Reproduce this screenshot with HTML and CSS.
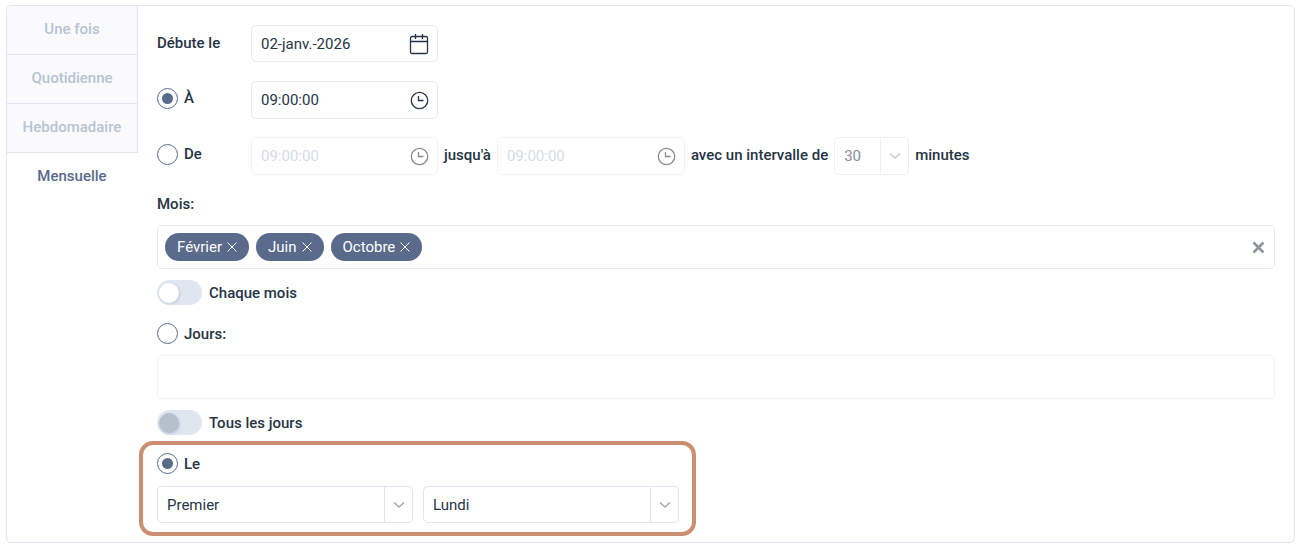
FILE: index.html
```html
<!DOCTYPE html>
<html lang="fr">
<head>
    <meta charset="UTF-8">
    <meta name="viewport" content="width=device-width, initial-scale=1.0">
    <title>Planification</title>
    <link rel="stylesheet" href="styles.css">
</head>
<body>

<div class="scheduler">
    <nav class="tabs">
        <button class="tab" type="button">Une fois</button>
        <button class="tab" type="button">Quotidienne</button>
        <button class="tab" type="button">Hebdomadaire</button>
        <button class="tab active" type="button">Mensuelle</button>
    </nav>

    <form class="content">
        <!-- Date et heures -->
        <div class="row date">
            <label class="row-label" for="startDate">Débute le</label>
            <div class="field">
                <input type="text" id="startDate" value="02-janv.-2026">
                <button class="icon" type="button" aria-label="Calendrier">
                    <svg width="20" height="22" viewBox="0 0 20 22"><rect x="1.500" y="3.500" width="17" height="17" rx="1.500"/><path d="M1.500 8.500h17M6.500 1v5M13.500 1v5"/></svg>
                </button>
            </div>
        </div>
        <div class="row">
            <label class="row-label choice"><input class="radio" type="radio" name="time" checked>À</label>
            <div class="field">
                <input type="text" value="09:00:00" aria-label="Heure">
                <button class="icon" type="button" aria-label="Choisir l'heure">
                    <svg width="20" height="20" viewBox="0 0 20 20"><circle cx="10.500" cy="10.500" r="8.200"/><path d="M9.500 6v4.500h5"/></svg>
                </button>
            </div>
        </div>
        <div class="row">
            <label class="row-label choice"><input class="radio" type="radio" name="time">De</label>
            <div class="field disabled">
                <input type="text" id="fromTime" value="09:00:00" aria-label="De" disabled>
                <button class="icon" type="button" aria-label="Choisir l'heure" disabled>
                    <svg width="20" height="20" viewBox="0 0 20 20"><circle cx="10.500" cy="10.500" r="8.200"/><path d="M9.500 6v4.500h5"/></svg>
                </button>
            </div>
            <label class="text" for="toTime">jusqu'à</label>
            <div class="field wide disabled">
                <input type="text" id="toTime" value="09:00:00" disabled>
                <button class="icon" type="button" aria-label="Choisir l'heure" disabled>
                    <svg width="20" height="20" viewBox="0 0 20 20"><circle cx="10.500" cy="10.500" r="8.200"/><path d="M9.500 6v4.500h5"/></svg>
                </button>
            </div>
            <label class="text" for="interval">avec un intervalle de</label>
            <div class="dropdown small disabled">
                <select id="interval" disabled>
                    <option>30</option>
                </select>
                <span class="arrow"><svg width="12" height="8" viewBox="0 0 12 8"><path d="M1 1.500l5 4.500 5-4.500"/></svg></span>
            </div>
            <span class="text">minutes</span>
        </div>

        <!-- Mois -->
        <div class="title">Mois:</div>
        <div class="multi">
            <span class="chip">Février<button type="button" aria-label="Retirer Février"><svg width="10" height="10" viewBox="0 0 10 10"><path d="M.5.5l9 9M9.500.5l-9 9"/></svg></button></span>
            <span class="chip">Juin<button type="button" aria-label="Retirer Juin"><svg width="10" height="10" viewBox="0 0 10 10"><path d="M.5.5l9 9M9.500.5l-9 9"/></svg></button></span>
            <span class="chip">Octobre<button type="button" aria-label="Retirer Octobre"><svg width="10" height="10" viewBox="0 0 10 10"><path d="M.5.5l9 9M9.500.5l-9 9"/></svg></button></span>
            <button class="clear" type="button" aria-label="Tout effacer"><svg width="15" height="13" viewBox="0 0 15 13"><path d="M1.500 1.500l10 10M11.500 1.500l-10 10"/></svg></button>
        </div>
        <label class="switch"><input type="checkbox">Chaque mois</label>

        <!-- Jours -->
        <label class="choice days"><input class="radio" type="radio" name="day"><span>Jours:</span></label>
        <input class="multi disabled" type="text" aria-label="Jours" disabled>
        <label class="switch"><input type="checkbox" disabled>Tous les jours</label>

        <div class="highlight">
            <label class="choice"><input class="radio" type="radio" name="day" checked><span>Le</span></label>
            <div class="selects">
                <div class="dropdown">
                    <select aria-label="Rang">
                        <option>Premier</option>
                    </select>
                    <span class="arrow"><svg width="12" height="8" viewBox="0 0 12 8"><path d="M1 1.500l5 4.500 5-4.500"/></svg></span>
                </div>
                <div class="dropdown">
                    <select aria-label="Jour de la semaine">
                        <option>Lundi</option>
                    </select>
                    <span class="arrow"><svg width="12" height="8" viewBox="0 0 12 8"><path d="M1 1.500l5 4.500 5-4.500"/></svg></span>
                </div>
            </div>
        </div>
    </form>
</div>

</body>
</html>
```
FILE: styles.css
```css
* {
    box-sizing: border-box;
}
body {
    margin: 5px 6px;
    background: #fff;
    color: #263445;
    font: 500 15px/20px Roboto, sans-serif;
}
button, input, select {
    font: inherit;
    color: inherit;
    margin: 0;
}
button {
    padding: 0;
    border: 0;
    background: none;
    cursor: pointer;
}
svg {
    display: block;
    fill: none;
    stroke: currentColor;
}
.scheduler {
    display: flex;
    border: 1px solid #e0e6ef;
    border-radius: 5px;
    overflow: hidden;
}

/* Onglets */
.tabs {
    display: flex;
    flex-direction: column;
    width: 131px;
    flex-shrink: 0;
}
.tab {
    height: 49px;
    padding-bottom: 2px;
    border-right: 1px solid #e0e6ef;
    border-bottom: 1px solid #e0e6ef;
    background: #fafafc;
    color: #b8c3d3;
}
.tab.active {
    border-color: transparent;
    background: #fff;
    color: #596a8a;
}
.content {
    flex: 1;
    min-width: 0;
    padding: 19px 19px 6px;
}

/* Lignes de saisie */
.row {
    display: flex;
    align-items: center;
    gap: 6px;
    height: 38px;
    margin-bottom: 18px;
}
.row.date {
    height: 37px;
    margin-bottom: 19px;
}
.row.date .field {
    height: 37px;
}
.row-label {
    width: 88px;
}
.row-label, .text {
    padding-bottom: 2px;
}
.choice {
    display: flex;
    align-items: center;
    gap: 6px;
}
.row .choice {
    padding-bottom: 4px;
}
.choice span {
    padding-top: 2px;
}
.radio {
    appearance: none;
    display: grid;
    place-items: center;
    width: 21px;
    height: 21px;
    border: 1px solid #596a8a;
    border-radius: 50%;
}
.radio:checked::before {
    content: "";
    width: 11px;
    height: 11px;
    border-radius: 50%;
    background: #596a8a;
}
.field {
    display: flex;
    align-items: center;
    width: 187px;
    height: 38px;
    padding: 0 8px 0 9px;
    border: 1px solid #e8eaed;
    border-radius: 5px;
}
.field.wide {
    width: 188px;
}
.field input {
    flex: 1;
    min-width: 0;
    padding: 0;
    border: 0;
    outline: 0;
    background: none;
    font-weight: 400;
}
.icon svg {
    stroke-width: 1.3;
}
.field.disabled, .multi.disabled {
    border-color: #f1f2f4;
}
.field.disabled input {
    color: #d5dbe5;
}
.field.disabled .icon {
    color: #858c95;
}

/* Listes */
.dropdown {
    display: grid;
    grid-template-columns: 1fr 28px;
    width: 256px;
    height: 37px;
    border: 1px solid #e0e6ef;
    border-radius: 5px;
}
.dropdown select {
    grid-area: 1 / 1 / 2 / 3;
    appearance: none;
    padding: 0 30px 0 9px;
    border: 0;
    background: none;
    font-weight: 400;
    opacity: 1;
}
.arrow {
    grid-area: 1 / 2;
    display: grid;
    place-items: center;
    border-left: 1px solid #e0e6ef;
    color: #a9a9ab;
    pointer-events: none;
}
.arrow svg {
    stroke-width: 1.5;
}
.dropdown.small {
    width: 75px;
    height: 38px;
}
.dropdown.disabled, .dropdown.disabled .arrow {
    border-color: #eeeff6;
}
.dropdown.disabled select {
    color: #858c95;
}
.dropdown.disabled .arrow {
    color: #c8c8ca;
}

/* Choix multiples */
.title {
    margin: 19px 0 11px;
}
.multi {
    display: flex;
    align-items: center;
    gap: 7px;
    width: 100%;
    height: 44px;
    padding: 0 7px;
    border: 1px solid #e8eaed;
    border-radius: 5px;
    background: #fff;
}
.chip {
    display: flex;
    align-items: center;
    gap: 5px;
    height: 28px;
    padding: 0 12px;
    border-radius: 14px;
    background: #596a8a;
    color: #fff;
    font-weight: 400;
}
.clear {
    margin-left: auto;
    color: #8d939a;
}
.clear svg {
    stroke-width: 2.5;
}
.switch {
    display: flex;
    align-items: center;
    gap: 7px;
    height: 25px;
    margin: 11px 0;
}
.switch input {
    appearance: none;
    display: flex;
    align-items: center;
    width: 45px;
    height: 25px;
    padding: 0 2px;
    border-radius: 13px;
    background: #e0e6ef;
}
.switch input::before {
    content: "";
    width: 20px;
    height: 20px;
    border-radius: 50%;
    background: #fff;
    box-shadow: 1px 1px 3px rgba(60, 80, 110, 0.2);
}
.switch input:disabled::before {
    background: #b5c0cf;
}
.days {
    margin: 17px 0 11px;
}

/* Cadre autour du choix actif */
.highlight {
    width: fit-content;
    margin: -5px 0 0 -18px;
    padding: 7px 13px 9px 14px;
    border: 4px solid #cc8e70;
    border-radius: 14px;
}
.selects {
    display: flex;
    gap: 10px;
    margin-top: 12px;
}
```
